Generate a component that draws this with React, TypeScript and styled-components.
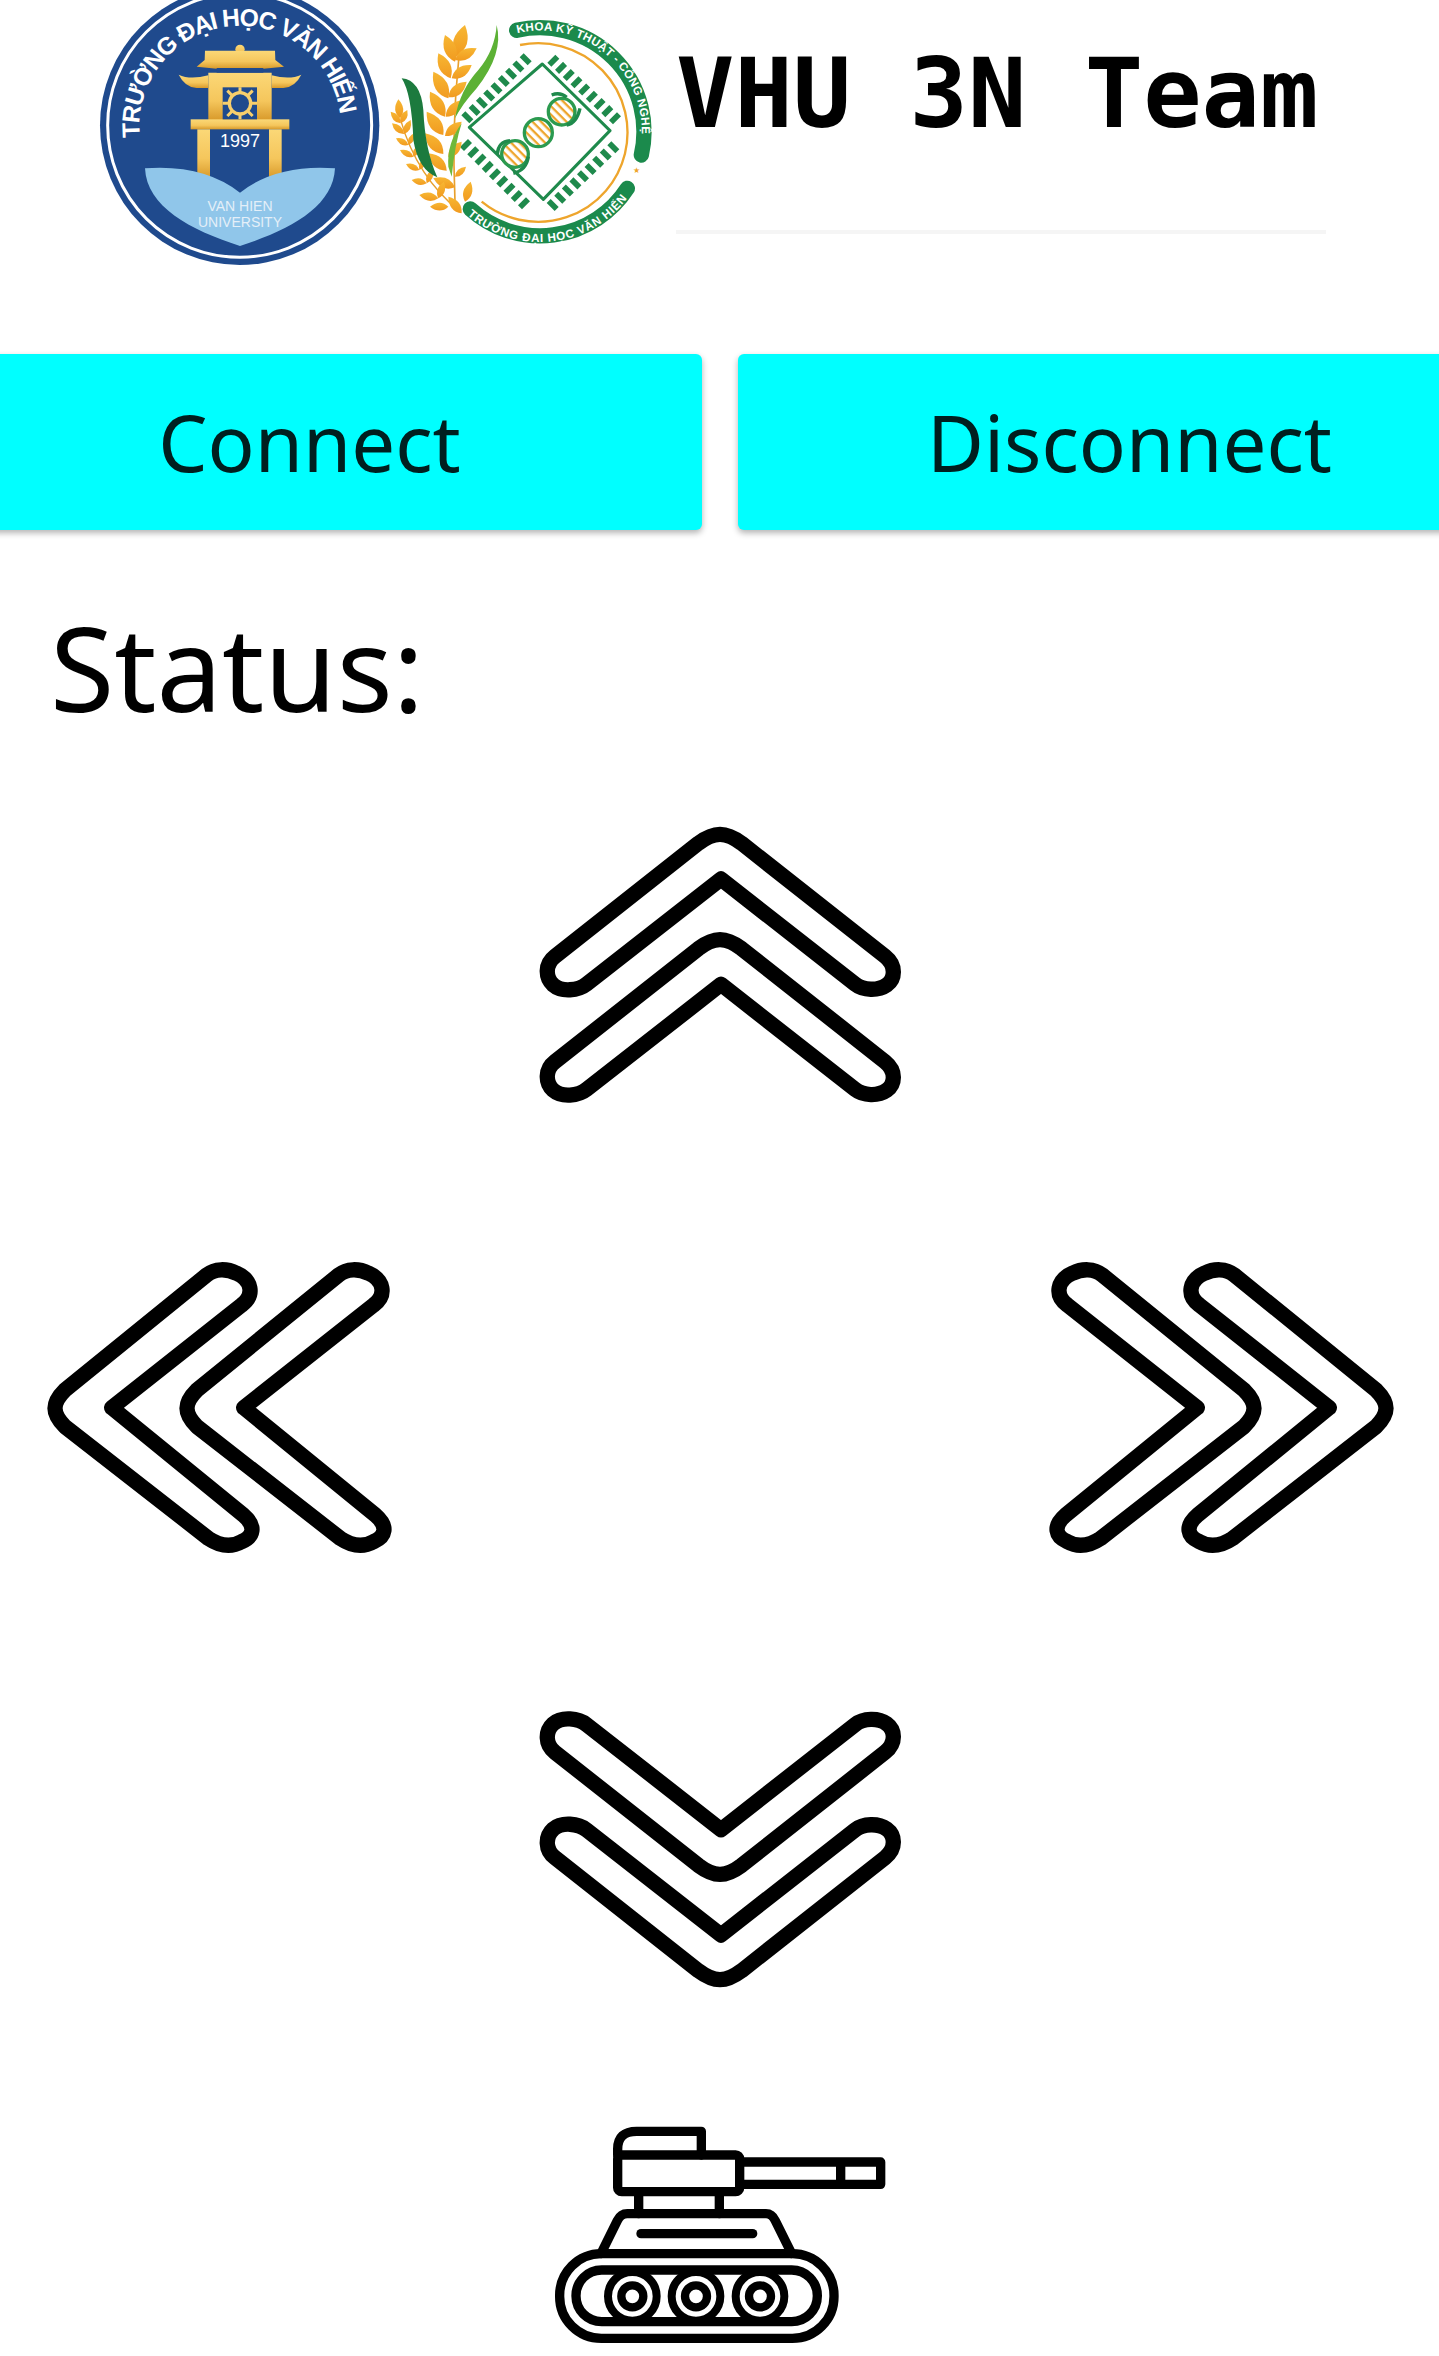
import React from 'react'
import styled, { createGlobalStyle } from 'styled-components'

const GlobalStyle = createGlobalStyle`
  html, body {
    margin: 0;
    padding: 0;
    background: #fff;
    overflow-x: hidden;
  }
`

const Page = styled.div`
  width: 1439px;
  height: 2356px;
  overflow: hidden;
  font-family: 'Noto Sans', 'Open Sans', sans-serif;
  color: #000;
`

const Header = styled.header`
  display: flex;
  align-items: flex-start;
  height: 354px;
  padding-left: 90px;
  box-sizing: border-box;
`

const LogoSvg = styled.svg<{ $top?: number }>`
  display: block;
  flex-shrink: 0;
  margin-top: ${({ $top }) => $top ?? 0}px;
`

const TitleBlock = styled.div`
  width: 650px;
  margin-left: 6px;
`

const Title = styled.h1`
  margin: 0;
  height: 230px;
  padding-top: 38px;
  box-sizing: border-box;
  font-family: 'DejaVu Sans Mono', 'Liberation Mono', monospace;
  font-size: 97px;
  font-weight: 700;
  line-height: 112px;
  white-space: nowrap;
`

const TitleRule = styled.hr`
  margin: 0;
  border: 0;
  height: 4px;
  background: #f5f5f5;
`

const ButtonRow = styled.div`
  display: flex;
  justify-content: center;
  gap: 36px;
`

const ActionButton = styled.button`
  flex-shrink: 0;
  width: 784px;
  height: 176px;
  border: 0;
  border-radius: 6px;
  background: #00ffff;
  color: #001f1f;
  font-family: 'Noto Sans', 'Open Sans', sans-serif;
  font-size: 78px;
  box-shadow: 0 3px 6px rgba(0, 0, 0, 0.3);
`

const Status = styled.div`
  margin-top: 72px;
  padding-left: 50px;
  font-size: 117px;
  line-height: 130px;
`

const Pad = styled.div`
  display: flex;
  flex-direction: column;
  margin-top: 77px;
`

const CenterRow = styled.div<{ $gap?: number }>`
  display: flex;
  justify-content: center;
  margin-top: ${({ $gap }) => $gap ?? 0}px;
`

const SideRow = styled.div`
  display: flex;
  justify-content: space-between;
  padding: 0 28px 0 30px;
  margin-top: 131px;
`

const ArrowSvg = styled.svg<{ $flip?: 'x' | 'y' }>`
  display: block;
  transform: ${({ $flip }) => ($flip === 'x' ? 'scaleX(-1)' : $flip === 'y' ? 'scaleY(-1)' : 'none')};
`

// outline of one chevron, traced from the up arrow
const UP_PATH =
  'M600 76C625 76 645 88 665 103L1095 442C1130 470 1125 510 1100 528C1075 546 1030 545 1005 525L603 210L200 525C175 545 125 550 100 528C75 505 75 465 105 442L535 103C555 88 575 76 600 76Z'
const LEFT_PATH =
  'M75 505C75 485 90 465 105 450L530 105C555 85 590 85 620 100C665 120 675 165 635 195L245 503L640 825C680 860 670 890 635 905C600 925 565 915 535 895L105 560C90 545 75 525 75 505Z'

const UpArrow = ({ flip }: { flip?: 'y' }) => (
  <ArrowSvg $flip={flip} width={400} height={300} viewBox="0 0 1200 900" fill="none" stroke="#000" strokeWidth={46} strokeLinejoin="round">
    <path d={UP_PATH} />
    <path d={UP_PATH} transform="translate(0 316)" />
  </ArrowSvg>
)

const LeftArrow = ({ flip }: { flip?: 'x' }) => (
  <ArrowSvg $flip={flip} width={380} height={330} viewBox="0 0 1140 990" fill="none" stroke="#000" strokeWidth={46} strokeLinejoin="round">
    <path d={LEFT_PATH} />
    <path d={LEFT_PATH} transform="translate(396 0)" />
  </ArrowSvg>
)

const TankIcon = () => (
  <svg width={380} height={256} viewBox="0 0 1140 768" fill="none" stroke="#000" strokeWidth={28} strokeLinejoin="round" strokeLinecap="round">
    <path d="M263 168V150Q263 97 320 97H514V168" />
    <rect x={263} y={168} width={366} height={110} rx={12} />
    <path d="M629 189H1052V256H629M932 189V256" />
    <path d="M326 278V344M568 278V344" />
    <path d="M213 464L262 365Q272 344 292 344H708Q726 344 736 365L785 464" />
    <path d="M333 404H668" />
    <rect x={89} y={464} width={823} height={254} rx={125} />
    <rect x={138} y={513} width={724} height={155} rx={77} />
    {[307, 498, 690].map((cx) => (
      <g key={cx}>
        <circle cx={cx} cy={592} r={73} fill="#fff" strokeWidth={24} />
        <circle cx={cx} cy={592} r={33} strokeWidth={25} />
      </g>
    ))}
  </svg>
)

const VanHienLogo = () => (
  <LogoSvg width={290} height={280} viewBox="0 0 870 840">
    <defs>
      <linearGradient id="gateGold" x1="0" y1="0" x2="0" y2="1">
        <stop offset="0" stopColor="#fbd877" />
        <stop offset="0.6" stopColor="#f5c65c" />
        <stop offset="1" stopColor="#d89a2b" />
      </linearGradient>
      <path id="schoolArc" d="M150 412A302 302 0 1 1 752 392" />
    </defs>
    <circle cx={449} cy={376} r={419} fill="#1f4a8d" />
    <circle cx={449} cy={376} r={396} fill="none" stroke="#fff" strokeWidth={9} />
    <text fill="#fff" fontFamily="'Liberation Sans', sans-serif" fontSize={74} fontWeight={700}>
      <textPath href="#schoolArc" textLength={945} lengthAdjust="spacing">
        TRƯỜNG ĐẠI HỌC VĂN HIẾN
      </textPath>
    </text>
    <g fill="url(#gateGold)">
      <circle cx={450} cy={148} r={14} />
      <path d="M345 152L555 152L556 180L582 200L520 206H380L320 200L344 180Z" />
      <path d="M355 218H545V360H355Z" />
      <path d="M266 224Q300 240 355 226V264H320Q285 262 266 224Z" />
      <path d="M634 224Q600 240 545 226V264H580Q615 262 634 224Z" />
      <rect x={302} y={358} width={296} height={30} />
      <rect x={322} y={388} width={38} height={146} />
      <rect x={537} y={388} width={38} height={146} />
    </g>
    <rect x={380} y={204} width={140} height={14} fill="#1f4a8d" />
    <rect x={398} y={262} width={103} height={96} fill="#1f4a8d" />
    <path d="M450 262V358M398 310H501M412 272L488 348M488 272L412 348" stroke="#f8cf6c" strokeWidth={9} />
    <circle cx={450} cy={310} r={37} fill="#f8cf6c" />
    <circle cx={450} cy={310} r={27} fill="#1f4a8d" />
    <text x={450} y={440} fill="#fff" fontFamily="'Liberation Sans', sans-serif" fontSize={54} textAnchor="middle">
      1997
    </text>
    <path d="M165 505Q340 492 450 578Q560 492 735 505C730 620 600 690 450 738C300 690 170 620 165 505Z" fill="#90c6ea" />
    <g fill="#e4eff8" fontFamily="'Liberation Sans', sans-serif" fontSize={42} textAnchor="middle">
      <text x={450} y={634}>VAN HIEN</text>
      <text x={450} y={680}>UNIVERSITY</text>
    </g>
  </LogoSvg>
)

// a grain of rice drawn from its base to its tip
const grain = (x1: number, y1: number, x2: number, y2: number, w = 0.42) => {
  const mx = x1 + (x2 - x1) * 0.45
  const my = y1 + (y2 - y1) * 0.45
  const nx = -(y2 - y1) * w
  const ny = (x2 - x1) * w
  return `M${x1} ${y1}Q${mx + nx} ${my + ny} ${x2} ${y2}Q${mx - nx} ${my - ny} ${x1} ${y1}Z`
}

const MAIN_GRAINS = [
  [228, 140, 255, 45],
  [225, 150, 290, 115],
  [215, 205, 275, 165],
  [205, 262, 260, 215],
  [197, 320, 250, 270],
  [195, 378, 245, 335],
  [205, 442, 245, 395],
  [225, 500, 258, 470],
  [255, 575, 272, 515],
  [225, 155, 195, 75],
  [212, 205, 175, 130],
  [205, 265, 160, 185],
  [195, 320, 150, 245],
  [190, 375, 140, 305],
  [190, 432, 135, 370],
  [200, 482, 145, 430],
  [225, 532, 160, 505],
]

const SMALL_GRAINS = [
  [60, 325, 55, 268],
  [62, 340, 32, 305],
  [62, 340, 82, 300],
  [72, 372, 36, 340],
  [72, 372, 92, 330],
  [85, 405, 48, 385],
  [85, 405, 102, 370],
  [100, 440, 60, 420],
  [100, 440, 118, 405],
  [118, 480, 78, 462],
  [118, 480, 135, 445],
  [140, 520, 95, 510],
  [140, 520, 158, 480],
  [175, 565, 118, 555],
  [175, 565, 192, 515],
  [205, 590, 150, 590],
  [245, 610, 205, 560],
]

const pinRow = (x1: number, y1: number, x2: number, y2: number, dx: number, dy: number) =>
  Array.from({ length: 9 }, (_, i) => {
    const x = x1 + ((x2 - x1) * i) / 8
    const y = y1 + ((y2 - y1) * i) / 8
    return `M${x} ${y}l${dx} ${dy}`
  }).join('')

const PINS = [
  pinRow(250, 310, 425, 136, 24, 24),
  pinRow(508, 164, 693, 337, 24, -24),
  pinRow(246, 417, 420, 592, 24, -24),
  pinRow(506, 573, 688, 400, 24, 24),
].join('')

const TechLogo = () => (
  <LogoSvg $top={10} width={290} height={250} viewBox="0 0 870 750">
    <defs>
      <linearGradient id="grainGold" x1="0" y1="0" x2="0" y2="1">
        <stop offset="0" stopColor="#f7b733" />
        <stop offset="1" stopColor="#f19a1f" />
      </linearGradient>
      <pattern id="dnaStripe" width={18} height={18} patternUnits="userSpaceOnUse" patternTransform="rotate(45)">
        <rect width={18} height={18} fill="#fff" />
        <rect width={18} height={7} fill="#eea52c" />
      </pattern>
      <path id="techTop" d="M412 70A302 302 0 0 1 780 420" />
      <path id="techBottom" d="M262 615A330 330 0 0 0 762 535" />
    </defs>
    <path d="M410 61A312 312 0 0 1 784 435M742 535A312 312 0 0 1 271 597" fill="none" stroke="#1b8a4c" strokeWidth={46} strokeLinecap="round" />
    <path d="M420 105A268 268 0 1 1 305 575" fill="none" stroke="#eea52c" strokeWidth={7} />
    <text x={770} y={490} fill="#eea52c" fontFamily="'DejaVu Sans', sans-serif" fontSize={24} textAnchor="middle">★</text>
    <g fill="#fff" fontFamily="'Liberation Sans', sans-serif" fontWeight={700} fontSize={35}>
      <text>
        <textPath href="#techTop" textLength={555} lengthAdjust="spacing">KHOA KỸ THUẬT - CÔNG NGHỆ</textPath>
      </text>
      <text>
        <textPath href="#techBottom" textLength={540} lengthAdjust="spacing">TRƯỜNG ĐẠI HỌC VĂN HIẾN</textPath>
      </text>
    </g>
    <path d="M487 162L690 362L490 568L268 352Z" fill="none" stroke="#1f8a4c" strokeWidth={9} strokeLinejoin="round" />
    <path d={PINS} stroke="#1f8a4c" strokeWidth={17} fill="none" />
    <g fill="url(#dnaStripe)" stroke="#2b9a4f" strokeWidth={10}>
      <circle cx={405} cy={432} r={40} />
      <circle cx={475} cy={368} r={42} />
      <circle cx={545} cy={305} r={40} />
    </g>
    <path d="M352 432Q355 395 390 392M400 490Q440 480 445 440M600 295Q590 340 560 345M515 255Q540 245 560 262" fill="none" stroke="#1f8a4c" strokeWidth={10} />
    <path d="M225 575Q215 350 236 150" fill="none" stroke="#e8a02c" strokeWidth={5} />
    <path d="M62 330Q110 500 240 605" fill="none" stroke="#e8a02c" strokeWidth={4} />
    <g fill="url(#grainGold)">
      {[...MAIN_GRAINS, ...SMALL_GRAINS].map(([a, b, c, d]) => (
        <path key={`${a}-${b}-${c}-${d}`} d={grain(a, b, c, d)} />
      ))}
    </g>
    <path d="M65 205Q122 210 130 300Q135 420 172 502Q115 480 100 390Q95 250 65 205Z" fill="#1c7a3e" />
    <path d="M350 45Q372 130 290 235Q245 285 225 325Q240 240 295 180Q345 120 350 45Z" fill="#5cb135" />
    <path d="M205 470Q200 400 245 340Q225 400 215 500Z" fill="#6fb83a" />
  </LogoSvg>
)

const App = () => (
  <Page>
    <GlobalStyle />
    <Header>
      <VanHienLogo />
      <TechLogo />
      <TitleBlock>
        <Title>VHU 3N Team</Title>
        <TitleRule />
      </TitleBlock>
    </Header>
    <ButtonRow>
      <ActionButton>Connect</ActionButton>
      <ActionButton>Disconnect</ActionButton>
    </ButtonRow>
    <Status>Status:</Status>
    <Pad>
      <CenterRow>
        <UpArrow />
      </CenterRow>
      <SideRow>
        <LeftArrow />
        <LeftArrow flip="x" />
      </SideRow>
      <CenterRow $gap={135}>
        <UpArrow flip="y" />
      </CenterRow>
      <CenterRow $gap={94}>
        <TankIcon />
      </CenterRow>
    </Pad>
  </Page>
)

export default App
